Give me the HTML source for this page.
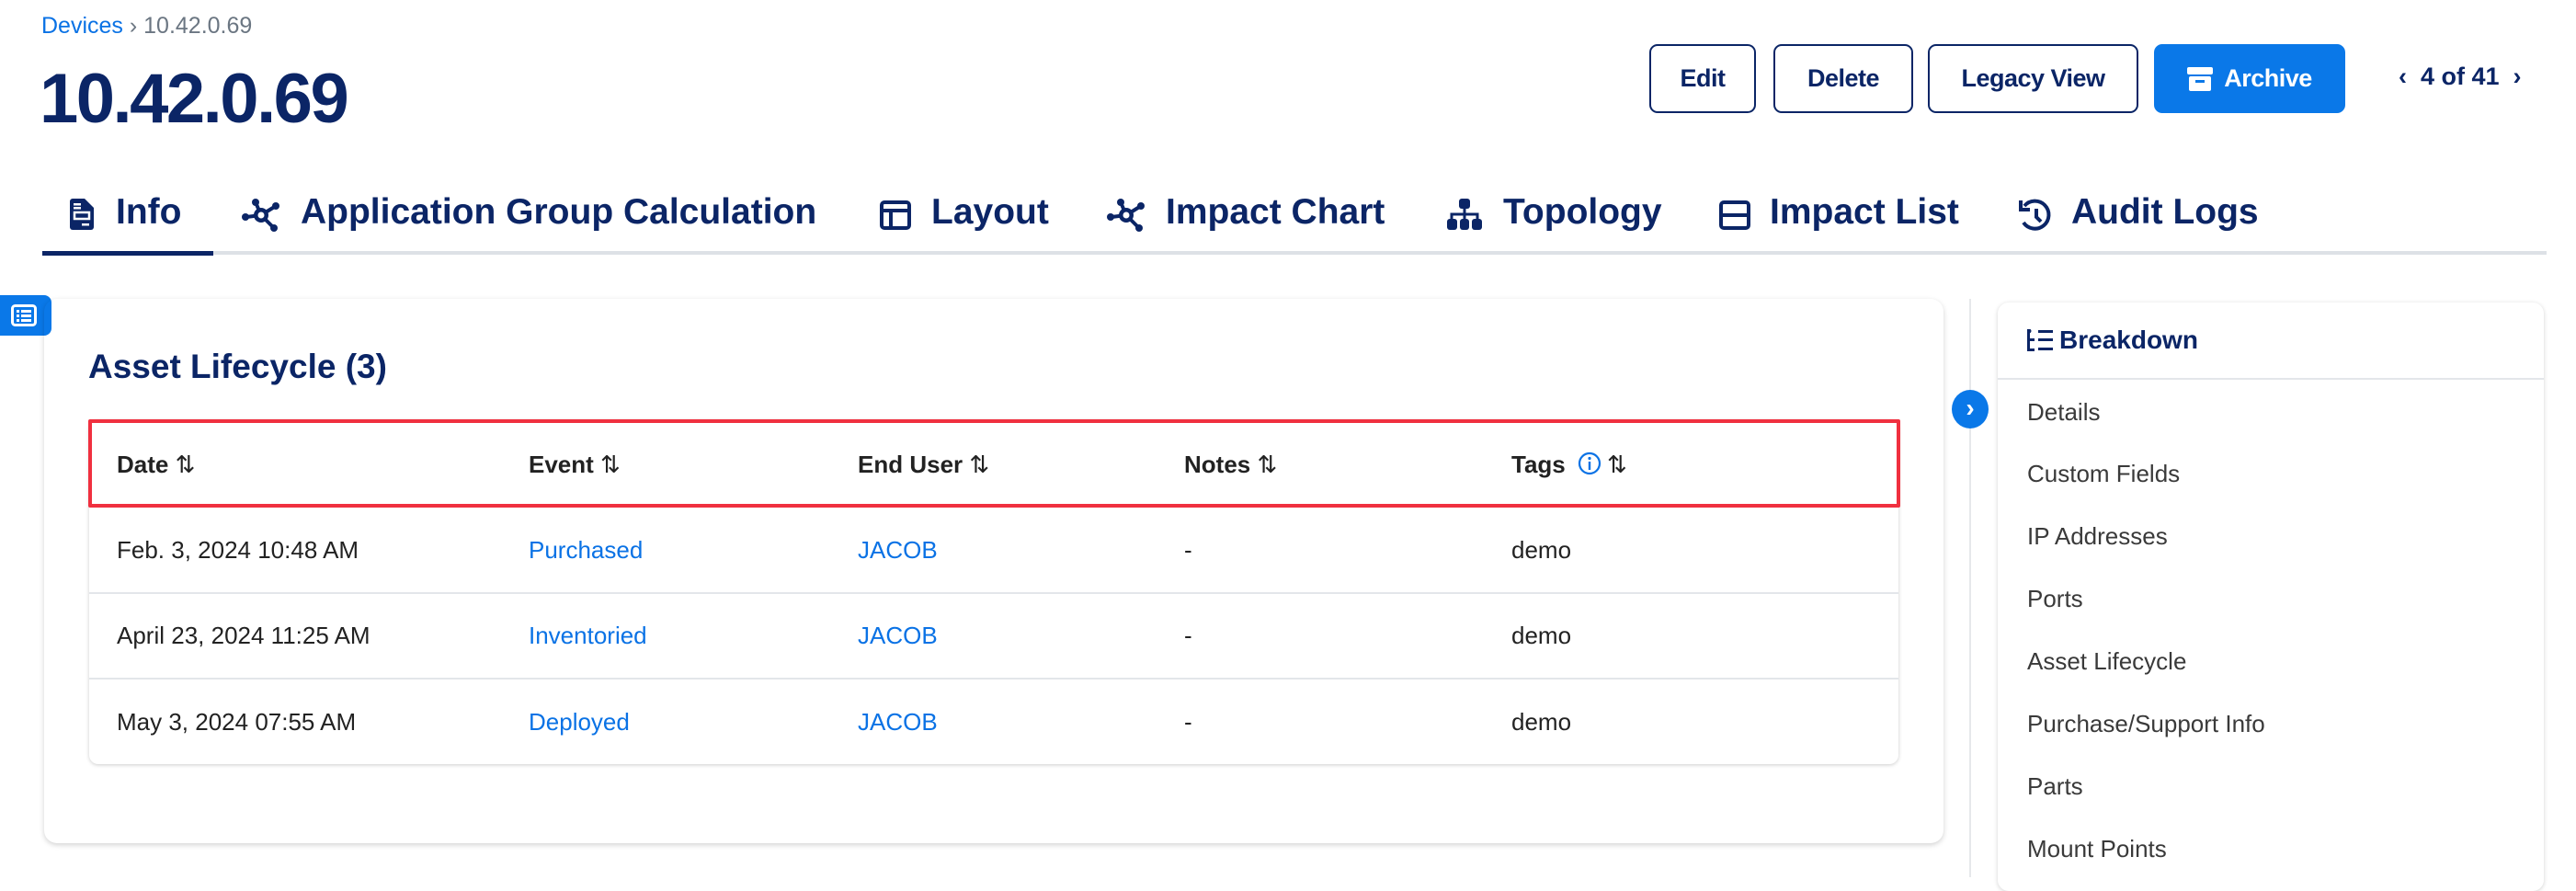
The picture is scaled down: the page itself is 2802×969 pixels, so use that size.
<!DOCTYPE html>
<html><head><meta charset="utf-8"><style>
*{box-sizing:border-box;margin:0;padding:0}
body{width:2802px;height:954px;background:#fff;font-family:"Liberation Sans",sans-serif;position:relative;overflow:hidden;color:#222}
.a{position:absolute;white-space:nowrap}
.navy{color:#0b2566}
.tab{position:absolute;top:206px;font-size:39px;font-weight:bold;color:#0b2566;line-height:50px}
.ti{position:absolute;top:216px}
.btn{position:absolute;top:48px;height:75px;border:2.5px solid #0b2566;border-radius:9px;font-size:27px;font-weight:bold;color:#0b2566;display:flex;align-items:center;justify-content:center;letter-spacing:-0.5px}
.hd{position:absolute;top:490px;font-size:26px;font-weight:bold;color:#222}
.cell{position:absolute;font-size:26px;color:#222}
.lk{color:#0a72e5}
.side{position:absolute;left:2205px;font-size:26px;color:#3a3a3a}
</style></head><body>
<div class="a" style="left:45px;top:14px;font-size:25px;color:#6b7682"><span style="color:#0a72e5">Devices</span> › 10.42.0.69</div>
<div class="a navy" style="left:43px;top:68px;font-size:76px;font-weight:bold;letter-spacing:-2.5px;line-height:80px">10.42.0.69</div>

<div class="btn" style="left:1794px;width:116px">Edit</div>
<div class="btn" style="left:1929px;width:152px">Delete</div>
<div class="btn" style="left:2097px;width:229px">Legacy View</div>
<div class="btn" style="left:2343px;width:208px;background:#0a78e8;border-color:#0a78e8;color:#fff">
<svg width="28" height="26" viewBox="0 0 28 26" style="margin-right:12px"><rect x="0" y="0" width="28" height="8" rx="2" fill="#fff"/><rect x="2" y="10" width="24" height="16" rx="2" fill="#fff"/><rect x="9" y="14" width="10" height="3" fill="#0a78e8"/></svg>Archive</div>
<div class="a navy" style="left:2609px;top:68px;font-size:27px;font-weight:bold">‹&nbsp; 4 of 41 &nbsp;›</div>

<!-- tabs -->
<svg class="ti" style="left:76px" width="26" height="34" viewBox="0 0 26 34"><path d="M3 0h13l10 10v21a3 3 0 0 1-3 3H3a3 3 0 0 1-3-3V3a3 3 0 0 1 3-3z" fill="#0b2566"/><rect x="5" y="15" width="16" height="7" fill="none" stroke="#fff" stroke-width="2.5"/><rect x="4" y="5" width="8" height="2.5" fill="#fff"/><rect x="4" y="9" width="8" height="2.5" fill="#fff"/><rect x="13" y="27" width="8" height="2.5" fill="#fff"/></svg>
<div class="tab" style="left:126px">Info</div>
<svg class="ti" style="left:262px" width="44" height="36" viewBox="0 0 44 36"><g fill="#0b2566" stroke="#0b2566" stroke-width="4"><line x1="6" y1="20" x2="22" y2="18"/><line x1="16" y1="4" x2="22" y2="18"/><line x1="38" y1="8" x2="22" y2="18"/><line x1="36" y1="32" x2="22" y2="18"/></g><g fill="#0b2566"><circle cx="5" cy="20" r="4"/><circle cx="16" cy="4" r="4"/><circle cx="38" cy="8" r="4"/><circle cx="36" cy="32" r="4"/><circle cx="22" cy="18" r="8"/></g><circle cx="22" cy="18" r="3.5" fill="#fff"/></svg>
<div class="tab" style="left:327px">Application Group Calculation</div>
<svg class="ti" style="left:957px;top:218px" width="34" height="32" viewBox="0 0 34 32"><rect x="2" y="2" width="30" height="28" rx="3" fill="none" stroke="#0b2566" stroke-width="4"/><line x1="2" y1="11" x2="32" y2="11" stroke="#0b2566" stroke-width="4"/><line x1="12" y1="11" x2="12" y2="30" stroke="#0b2566" stroke-width="4"/></svg>
<div class="tab" style="left:1013px">Layout</div>
<svg class="ti" style="left:1203px" width="44" height="36" viewBox="0 0 44 36"><g fill="#0b2566" stroke="#0b2566" stroke-width="4"><line x1="6" y1="20" x2="22" y2="18"/><line x1="16" y1="4" x2="22" y2="18"/><line x1="38" y1="8" x2="22" y2="18"/><line x1="36" y1="32" x2="22" y2="18"/></g><g fill="#0b2566"><circle cx="5" cy="20" r="4"/><circle cx="16" cy="4" r="4"/><circle cx="38" cy="8" r="4"/><circle cx="36" cy="32" r="4"/><circle cx="22" cy="18" r="8"/></g><circle cx="22" cy="18" r="3.5" fill="#fff"/></svg>
<div class="tab" style="left:1268px">Impact Chart</div>
<svg class="ti" style="left:1574px" width="38" height="34" viewBox="0 0 38 34"><g fill="#0b2566"><rect x="13" y="0" width="12" height="11" rx="3"/><rect x="0" y="22" width="11" height="12" rx="3"/><rect x="14" y="22" width="10" height="12" rx="3"/><rect x="27" y="22" width="11" height="12" rx="3"/></g><path d="M19 11v6M5 22v-5h28v5M19 17v5" stroke="#0b2566" stroke-width="3" fill="none"/></svg>
<div class="tab" style="left:1635px">Topology</div>
<svg class="ti" style="left:1870px;top:218px" width="34" height="32" viewBox="0 0 34 32"><rect x="2" y="2" width="30" height="28" rx="3" fill="none" stroke="#0b2566" stroke-width="4"/><line x1="2" y1="16" x2="32" y2="16" stroke="#0b2566" stroke-width="4"/></svg>
<div class="tab" style="left:1925px">Impact List</div>
<svg class="ti" style="left:2196px" width="36" height="38" viewBox="0 0 36 38"><path d="M6 8A15 15 0 1 1 5 26" fill="none" stroke="#0b2566" stroke-width="4"/><path d="M2 2v10h10" fill="none" stroke="#0b2566" stroke-width="4"/><path d="M19 11v9l5 5" fill="none" stroke="#0b2566" stroke-width="4"/></svg>
<div class="tab" style="left:2253px">Audit Logs</div>
<div class="a" style="left:46px;top:273px;width:2724px;height:4px;background:#dde1e6"></div>
<div class="a" style="left:46px;top:273px;width:186px;height:5px;background:#0b2566"></div>

<!-- side toggle -->
<div class="a" style="left:0;top:321px;width:56px;height:44px;background:#0a78e8;border-radius:0 8px 8px 0"></div>
<svg class="a" style="left:12px;top:331px" width="28" height="24" viewBox="0 0 28 24"><rect x="1.5" y="1.5" width="25" height="21" rx="3" fill="none" stroke="#fff" stroke-width="3"/><g fill="#fff"><rect x="6" y="6" width="3" height="3"/><rect x="11" y="6" width="11" height="3"/><rect x="6" y="11" width="3" height="3"/><rect x="11" y="11" width="11" height="3"/><rect x="6" y="16" width="3" height="3"/><rect x="11" y="16" width="11" height="3"/></g></svg>

<!-- main card -->
<div class="a" style="left:48px;top:325px;width:2066px;height:592px;border-radius:14px;box-shadow:0 2px 6px rgba(0,0,0,.18)"></div>
<div class="a navy" style="left:96px;top:378px;font-size:37px;font-weight:bold">Asset Lifecycle (3)</div>
<div class="a" style="left:97px;top:457px;width:1968px;height:374px;border-radius:10px;box-shadow:0 1px 4px rgba(0,0,0,.2)"></div>
<div class="a" style="left:96px;top:456px;width:1971px;height:96px;border:4px solid #f0303f;border-radius:2px"></div>
<div class="hd" style="left:127px">Date <span style="font-weight:normal">⇅</span></div>
<div class="hd" style="left:575px">Event <span style="font-weight:normal">⇅</span></div>
<div class="hd" style="left:933px">End User <span style="font-weight:normal">⇅</span></div>
<div class="hd" style="left:1288px">Notes <span style="font-weight:normal">⇅</span></div>
<div class="hd" style="left:1644px">Tags <svg width="26" height="26" viewBox="0 0 26 26" style="vertical-align:-3px;margin:0 6px"><circle cx="13" cy="13" r="11" fill="none" stroke="#0a72e5" stroke-width="2.2"/><rect x="11.8" y="11" width="2.4" height="9" fill="#0a72e5"/><circle cx="13" cy="7.5" r="1.6" fill="#0a72e5"/></svg><span style="font-weight:normal">⇅</span></div>
<div class="a" style="left:97px;top:644px;width:1968px;height:2px;background:#e3e6ea"></div>
<div class="a" style="left:97px;top:737px;width:1968px;height:2px;background:#e3e6ea"></div>
<div class="cell" style="left:127px;top:583px">Feb. 3, 2024 10:48 AM</div>
<div class="cell lk" style="left:575px;top:583px">Purchased</div>
<div class="cell lk" style="left:933px;top:583px">JACOB</div>
<div class="cell" style="left:1288px;top:583px">-</div>
<div class="cell" style="left:1644px;top:583px">demo</div>
<div class="cell" style="left:127px;top:676px">April 23, 2024 11:25 AM</div>
<div class="cell lk" style="left:575px;top:676px">Inventoried</div>
<div class="cell lk" style="left:933px;top:676px">JACOB</div>
<div class="cell" style="left:1288px;top:676px">-</div>
<div class="cell" style="left:1644px;top:676px">demo</div>
<div class="cell" style="left:127px;top:770px">May 3, 2024 07:55 AM</div>
<div class="cell lk" style="left:575px;top:770px">Deployed</div>
<div class="cell lk" style="left:933px;top:770px">JACOB</div>
<div class="cell" style="left:1288px;top:770px">-</div>
<div class="cell" style="left:1644px;top:770px">demo</div>

<!-- divider + toggle -->
<div class="a" style="left:2142px;top:325px;width:2px;height:629px;background:#e6e8eb"></div>
<div class="a" style="left:2123px;top:424px;width:40px;height:42px;border-radius:50%;background:#0a78e8;color:#fff;font-size:28px;font-weight:bold;text-align:center;line-height:40px">›</div>

<!-- breakdown -->
<div class="a" style="left:2173px;top:329px;width:594px;height:640px;border-radius:12px;box-shadow:0 1px 5px rgba(0,0,0,.18)"></div>
<div class="a" style="left:2173px;top:411px;width:594px;height:2px;background:#e3e6ea"></div>
<svg class="a" style="left:2205px;top:358px" width="28" height="24" viewBox="0 0 28 24"><g fill="#0b2566"><rect x="0" y="0" width="3" height="24"/><rect x="0" y="10" width="8" height="3"/><rect x="0" y="21" width="8" height="3"/><circle cx="2" cy="2" r="2.5"/><rect x="12" y="1" width="16" height="3"/><rect x="12" y="10" width="16" height="3"/><rect x="12" y="20" width="16" height="3"/></g></svg>
<div class="a navy" style="left:2240px;top:354px;font-size:28px;font-weight:bold">Breakdown</div>
<div class="side" style="top:433px">Details</div>
<div class="side" style="top:500px">Custom Fields</div>
<div class="side" style="top:568px">IP Addresses</div>
<div class="side" style="top:636px">Ports</div>
<div class="side" style="top:704px">Asset Lifecycle</div>
<div class="side" style="top:772px">Purchase/Support Info</div>
<div class="side" style="top:840px">Parts</div>
<div class="side" style="top:908px">Mount Points</div>
</body></html>
